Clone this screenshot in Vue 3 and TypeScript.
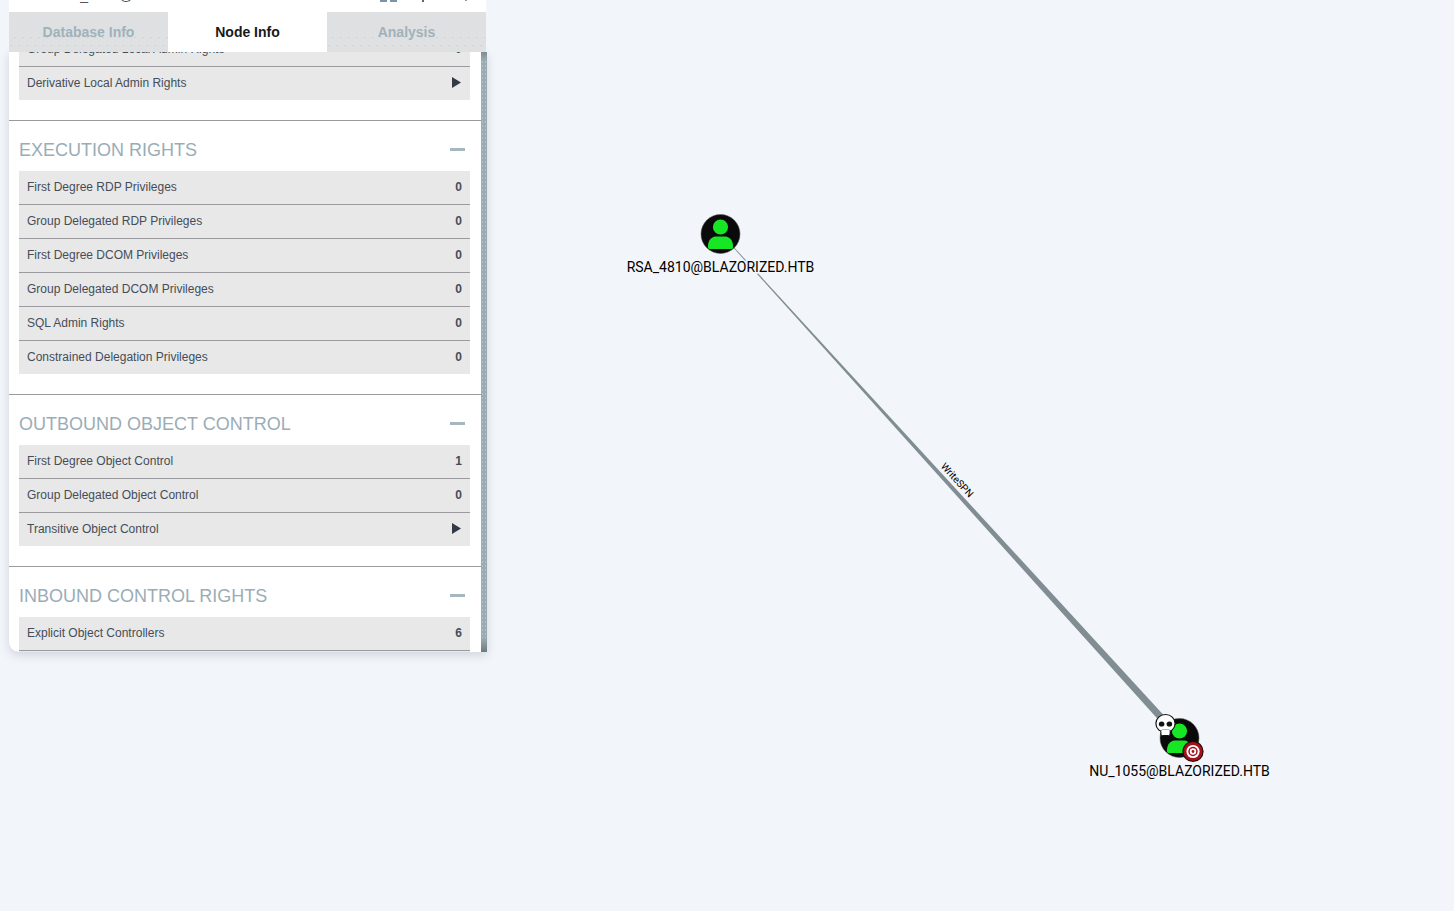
<script setup lang="ts">
interface Row { label: string; value?: string; arrow?: boolean }
interface Section { title: string; rows: Row[] }

const tabs = [
  { label: 'Database Info', active: false },
  { label: 'Node Info', active: true },
  { label: 'Analysis', active: false },
]

const sections: Section[] = [
  {
    title: 'LOCAL ADMIN RIGHTS',
    rows: [
      { label: 'Group Delegated Local Admin Rights', value: '0' },
      { label: 'Derivative Local Admin Rights', arrow: true },
    ],
  },
  {
    title: 'EXECUTION RIGHTS',
    rows: [
      { label: 'First Degree RDP Privileges', value: '0' },
      { label: 'Group Delegated RDP Privileges', value: '0' },
      { label: 'First Degree DCOM Privileges', value: '0' },
      { label: 'Group Delegated DCOM Privileges', value: '0' },
      { label: 'SQL Admin Rights', value: '0' },
      { label: 'Constrained Delegation Privileges', value: '0' },
    ],
  },
  {
    title: 'OUTBOUND OBJECT CONTROL',
    rows: [
      { label: 'First Degree Object Control', value: '1' },
      { label: 'Group Delegated Object Control', value: '0' },
      { label: 'Transitive Object Control', arrow: true },
    ],
  },
  {
    title: 'INBOUND CONTROL RIGHTS',
    rows: [
      { label: 'Explicit Object Controllers', value: '6' },
      { label: 'Unrolled Object Controllers', value: '6' },
    ],
  },
]
</script>

<template>
  <div class="page">
    <aside class="sidebar">
      <div class="topbar">
        <span class="topbar-name">NU_1055@</span>
        <span class="topbar-icons">
          <i class="tb-a"></i><i class="tb-a"></i><i class="tb-b"></i><i class="tb-c"></i>
        </span>
      </div>
      <nav class="tabs">
        <div v-for="t in tabs" :key="t.label" class="tab" :class="{ active: t.active }">{{ t.label }}</div>
      </nav>
      <div class="panel">
        <div class="scroller">
          <section v-for="s in sections" :key="s.title" class="section">
            <header class="section-head">
              <h4>{{ s.title }}</h4>
              <span class="minus"></span>
            </header>
            <div class="rows">
              <div v-for="r in s.rows" :key="r.label" class="row">
                <span>{{ r.label }}</span>
                <svg v-if="r.arrow" class="arrow" width="9" height="11" viewBox="0 0 9 11"><path d="M0 0 L9 5.5 L0 11 Z" fill="#343a45" /></svg>
                <b v-else>{{ r.value }}</b>
              </div>
            </div>
          </section>
        </div>
        <div class="scrollbar"><div class="cap"></div><div class="thumb"></div></div>
      </div>
    </aside>

    <svg class="graph" width="1454" height="911" viewBox="0 0 1454 911">
      <defs>
        <g id="user-glyph">
          <circle r="19.5" fill="#0a0a0a" stroke="#555" stroke-width="0.5" />
          <circle cx="0" cy="-7" r="7.6" fill="#17e625" />
          <path d="M-12.6 13 C-12.6 5 -8 2.6 -4 2.6 L4 2.6 C8 2.6 12.6 5 12.6 13 Q12.6 15 11 15 L-11 15 Q-12.6 15 -12.6 13 Z" fill="#17e625" />
        </g>
      </defs>

      <polygon points="733.6,248 734.2,247.4 1165.6,717.3 1160.4,722.1" fill="#808d93" />
      <text class="edge-label" transform="translate(956.5 480.5) rotate(47.4)" text-anchor="middle" dominant-baseline="middle">WriteSPN</text>

      <use href="#user-glyph" x="720.5" y="234" />
      <text class="node-label" x="720.5" y="272" text-anchor="middle">RSA_4810@BLAZORIZED.HTB</text>

      <use href="#user-glyph" x="1179.5" y="738" />
      <g transform="translate(1165.5 725)">
        <ellipse cx="0" cy="-1.5" rx="9.6" ry="9" fill="#fff" stroke="#111" stroke-width="1.2" />
        <rect x="-4.6" y="5" width="9.2" height="5.5" rx="1.5" fill="#fff" stroke="#111" stroke-width="1" />
        <ellipse cx="-3.9" cy="-1" rx="2.8" ry="2.6" fill="#111" />
        <ellipse cx="3.9" cy="-1" rx="2.8" ry="2.6" fill="#111" />
        <rect x="-4" y="4.6" width="8" height="2" fill="#fff" />
      </g>
      <g transform="translate(1193 751.5)">
        <circle r="10.6" fill="#1a0a0a" />
        <circle r="9.6" fill="#a3111b" />
        <circle r="6.6" fill="#fff" />
        <circle r="4.7" fill="#a3111b" />
        <circle r="3.2" fill="#fff" />
        <circle r="1.4" fill="#a3111b" />
      </g>
      <text class="node-label" x="1179.5" y="776" text-anchor="middle">NU_1055@BLAZORIZED.HTB</text>
    </svg>
  </div>
</template>

<style>
html, body { margin: 0; background: #f2f5fa; }
</style>

<style scoped>
.page {
  position: relative;
  width: 1454px;
  height: 911px;
  overflow: hidden;
  background: #f2f5fa;
  font-family: "Liberation Sans", Arial, sans-serif;
}
.graph { position: absolute; left: 0; top: 0; }
.node-label {
  font: 14px Roboto, sans-serif;
  fill: #000;
  stroke: #f2f5fa;
  stroke-width: 3px;
  paint-order: stroke;
}
.edge-label { font: 10px Roboto, sans-serif; fill: #000; }

.sidebar {
  position: relative;
  z-index: 1;
  width: 477px;
  margin-left: 9px;
}
.topbar {
  height: 12px;
  background: #fff;
  overflow: hidden;
  position: relative;
}
.topbar-name {
  position: absolute;
  left: 51px;
  top: -13px;
  font-size: 14px;
  line-height: 16px;
  color: #555;
}
.topbar-icons { position: absolute; left: 371px; top: 0; display: flex; gap: 3px; }
.tb-a { width: 7px; height: 2px; background: #7e93a8; }
.tb-b { width: 2px; height: 2px; background: #666; margin-left: 22px; }
.tb-c { width: 2px; height: 1px; background: #999; margin-left: 38px; }

.tabs { display: flex; height: 40px; position: relative; z-index: 2; }
.tab {
  display: flex;
  align-items: center;
  justify-content: center;
  box-sizing: border-box;
  width: 159px;
  font-size: 14px;
  font-weight: 700;
  color: #9fb2bc;
  background-color: #dfe0e1;
  background-image:
    radial-gradient(circle, #d0d4d6 0.7px, transparent 0.8px),
    radial-gradient(circle, #d0d4d6 0.7px, transparent 0.8px);
  background-size: 8px 3px, 8px 3px;
  background-repeat: repeat-x, repeat-x;
  background-position: 2px 24px, 6px 32px;
}
.tab.active {
  background: #fff;
  color: #16191c;
}

.panel {
  position: relative;
  box-sizing: border-box;
  height: 600px;
  width: 478px;
  overflow: hidden;
  background: #fff;
  border-radius: 0 0 0 10px;
  box-shadow: 0 3px 10px rgba(120, 130, 140, 0.28);
}
.scroller {
  margin-top: -70px;
  margin-right: 6px;
}
.section {
  box-sizing: border-box;
  padding-bottom: 20px;
  border-top: 1px solid #9a9a9f;
}
.section-head {
  display: flex;
  align-items: center;
  justify-content: space-between;
  box-sizing: border-box;
  height: 49px;
  margin-top: 1px;
  padding: 7px 16px 0 10px;
}
.section-head h4 {
  margin: 0;
  font-size: 18px;
  font-weight: 400;
  color: #9aadb6;
}
.minus { width: 15px; height: 3px; margin-bottom: 2px; background: #a6b7bf; }
.rows { margin: 0 11px 0 10px; }
.row {
  display: flex;
  align-items: center;
  justify-content: space-between;
  box-sizing: border-box;
  height: 34px;
  padding: 0 8px 2px;
  background: #e8e8e8;
  border-bottom: 1px solid #9a9a9f;
  font-size: 12px;
  color: #454d58;
}
.row:last-child { height: 33px; border-bottom: none; }
.row b { color: #454d58; }
.arrow { display: block; margin-right: 1px; }

.scrollbar {
  position: absolute;
  top: 0;
  right: 0;
  width: 6px;
  height: 600px;
  background-color: #9aabb3;
  background-image: radial-gradient(circle, #b5c2c8 0.6px, transparent 0.7px);
  background-size: 3px 4px;
}
.cap {
  position: absolute;
  left: 0;
  right: 0;
  top: 0;
  height: 8px;
  background: linear-gradient(#7f8b90, #9aabb3);
}
.thumb {
  position: absolute;
  left: 0;
  right: 0;
  bottom: 0;
  height: 14px;
  background: linear-gradient(#9aabb3, #6f7a7f);
}
</style>
